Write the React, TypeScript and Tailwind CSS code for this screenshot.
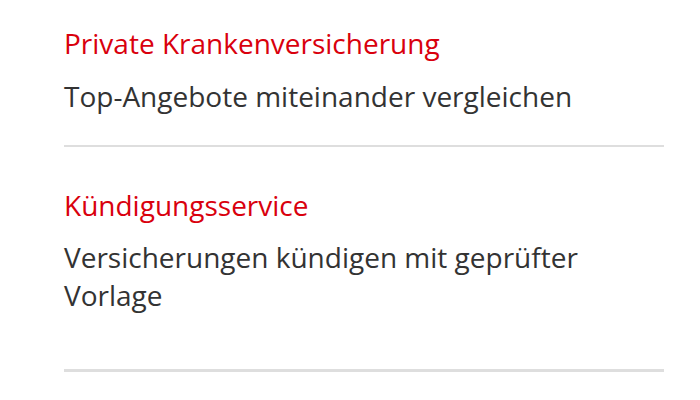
export default function App() {
  return (
    <div className="w-[700px] h-[400px] bg-white overflow-hidden" style={{ fontFamily: '"Open Sans", sans-serif' }}>
      <div className="ml-[64px] w-[600px]">
        <div className="pt-[25px] pb-[31px] border-b-2 border-[#dedede]">
          <div className="text-[28px] leading-[36px] text-[#d9000d]">Private Krankenversicherung</div>
          <div className="mt-[17px] text-[28px] leading-[36px] text-[#333333]">Top-Angebote miteinander vergleichen</div>
        </div>
        <div className="pt-[40px] pb-[55px] border-b-[3px] border-[#dedede]">
          <div className="text-[28px] leading-[36px] text-[#d9000d]">Kündigungsservice</div>
          <div className="mt-[15px] text-[28px] leading-[38px] text-[#333333]">Versicherungen kündigen mit geprüfter Vorlage</div>
        </div>
      </div>
    </div>
  );
}
